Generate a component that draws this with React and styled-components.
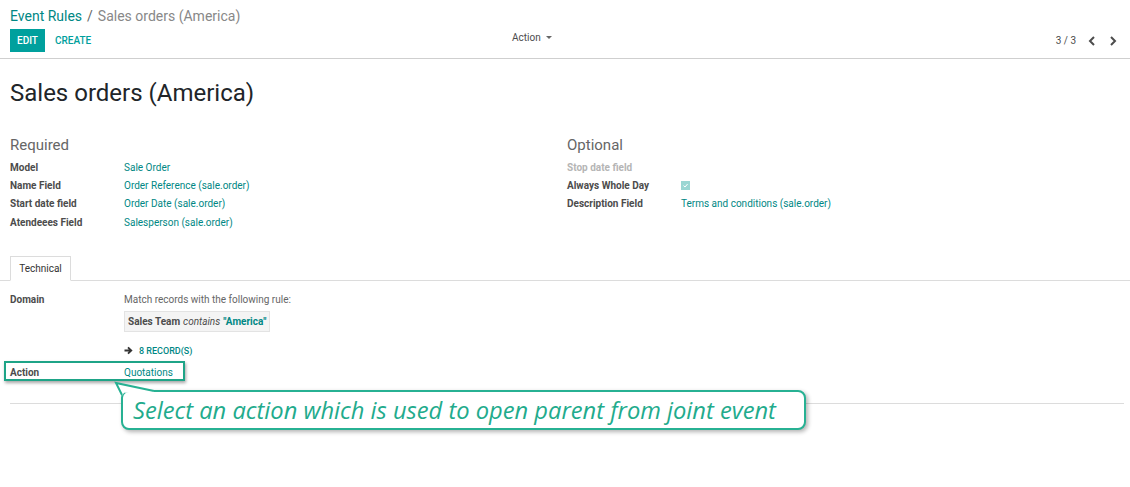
import React from "react";
import styled, { createGlobalStyle } from "styled-components";

const GlobalStyle = createGlobalStyle`
  html, body {
    margin: 0;
    padding: 0;
    background: #fff;
    font-family: Roboto, "Liberation Sans", sans-serif;
    color: #4c4c4c;
  }
  #root {
    min-height: 100vh;
  }
`;

const teal = "#00A09D";
const link = "#008784";

const ControlPanel = styled.header`
  border-bottom: 1px solid #cfcfcf;
  padding: 5px 10px 6px 10px;
`;

const Breadcrumb = styled.div`
  font-size: 14px;
  line-height: 22px;
  height: 24px;
  color: #888;

  a {
    color: ${link};
    text-decoration: none;
  }
`;

const Separator = styled.span`
  color: #666;
  margin: 0 5px;
`;

const ButtonBar = styled.div`
  display: grid;
  grid-template-columns: 1fr auto 1fr;
  align-items: center;
  height: 23px;
`;

const Buttons = styled.div`
  display: flex;
  align-items: center;
`;

const Button = styled.button`
  border: none;
  height: 23px;
  padding: 0 ${(p) => (p.primary ? "7px" : "10px")};
  background: ${(p) => (p.primary ? teal : "transparent")};
  color: ${(p) => (p.primary ? "#fff" : teal)};
  font-family: Roboto, "Liberation Sans", sans-serif;
  font-size: 10px;
  font-weight: 500;
  text-transform: uppercase;
  cursor: pointer;
`;

const ActionMenu = styled.div`
  font-size: 10px;
  color: #4c4c4c;
  display: flex;
  align-items: center;
  gap: 5px;
  margin-left: -53px;
  margin-top: -6px;
`;

const Caret = styled.span`
  width: 0;
  height: 0;
  border-left: 3px solid transparent;
  border-right: 3px solid transparent;
  border-top: 3px solid #666;
`;

const Pager = styled.div`
  justify-self: end;
  display: flex;
  align-items: center;
  font-size: 10px;
  color: #4c4c4c;
  margin-right: -3px;
`;

const PagerValue = styled.span`
  margin-right: 5px;
`;

const PagerButton = styled.span`
  width: 21px;
  display: flex;
  justify-content: center;
`;

const Sheet = styled.main`
  padding: 0 10px;
`;

const Title = styled.h1`
  margin: 19px 0 0 0;
  font-size: 24px;
  line-height: 30px;
  font-weight: 400;
  color: #212529;
`;

const Groups = styled.div`
  display: grid;
  grid-template-columns: 557px 1fr;
  margin-top: 28px;
`;

const GroupTitle = styled.h2`
  margin: 0 0 3px 0;
  font-size: 15px;
  line-height: 19px;
  font-weight: 400;
  color: #666;
`;

const FieldRow = styled.div`
  display: grid;
  grid-template-columns: 114px 1fr;
  align-items: center;
  height: 18.4px;
  font-size: 10px;
`;

const Label = styled.span`
  font-weight: 700;
  color: ${(p) => (p.muted ? "#b5b5b5" : "#4c4c4c")};
`;

const Value = styled.span`
  color: ${link};
`;

const Checkbox = styled.span`
  width: 9px;
  height: 9px;
  background: #9ad6d3;
  display: flex;
  align-items: center;
  justify-content: center;
`;

const Notebook = styled.div`
  margin: 24px -10px 0 -10px;
  border-bottom: 1px solid #dcdcdc;
  padding-left: 10px;
  display: flex;
  height: 24px;
`;

const Tab = styled.div`
  border: 1px solid #dcdcdc;
  border-bottom: 1px solid #fff;
  margin-bottom: -1px;
  background: #fff;
  width: 59px;
  font-size: 10px;
  color: #333;
  display: flex;
  align-items: center;
  justify-content: center;
`;

const TabPane = styled.section`
  padding-top: 13px;
  border-bottom: 1px solid #dcdcdc;
  padding-bottom: 23px;
  margin-right: -4px;
`;

const DomainRow = styled.div`
  display: grid;
  grid-template-columns: 114px 1fr;
  font-size: 10px;
`;

const DomainValue = styled.div`
  display: flex;
  flex-direction: column;
  align-items: flex-start;
`;

const DomainText = styled.span`
  color: #666;
`;

const Chip = styled.div`
  margin-top: 6px;
  background: #f4f4f4;
  border: 1px solid #e3e3e3;
  padding: 3px 3px;
  line-height: 13px;
  font-size: 10px;
  color: #4c4c4c;

  b {
    font-weight: 700;
  }
  i {
    margin: 0 3px;
  }
  strong {
    color: ${link};
    font-weight: 700;
  }
`;

const RecordsLink = styled.div`
  margin-top: 14px;
  display: flex;
  align-items: center;
  gap: 6px;
  font-size: 9px;
  font-weight: 500;
  color: ${link};
  text-transform: uppercase;
`;

const ActionRow = styled.div`
  position: relative;
  display: grid;
  grid-template-columns: 114px 1fr;
  font-size: 10px;
  margin-top: 10px;
  height: 14px;
  align-items: center;
`;

const Highlight = styled.div`
  position: absolute;
  left: -6px;
  top: -5px;
  width: 177px;
  height: 16px;
  border: 2px solid #1ea487;
  box-shadow: 1px 2px 3px rgba(0, 0, 0, 0.35);
  pointer-events: none;
`;

const Tail = styled.svg`
  position: absolute;
  left: 100px;
  top: 12px;
  overflow: visible;
  z-index: 2;
`;

const Callout = styled.div`
  position: absolute;
  left: 111px;
  top: 24px;
  width: 685px;
  height: 40px;
  border: 2px solid #27b193;
  border-radius: 8px;
  background: #fff;
  box-shadow: 2px 2px 4px rgba(0, 0, 0, 0.3);
  display: flex;
  align-items: center;
  padding-left: 10px;
  box-sizing: border-box;
  font-family: "Open Sans", "DejaVu Sans", sans-serif;
  font-style: italic;
  font-size: 23.7px;
  color: #22ab8c;
  white-space: nowrap;
  z-index: 1;
`;

const fields = [
  ["Model", "Sale Order"],
  ["Name Field", "Order Reference (sale.order)"],
  ["Start date field", "Order Date (sale.order)"],
  ["Atendeees Field", "Salesperson (sale.order)"],
];

export default function App() {
  return (
    <>
      <GlobalStyle />
      <ControlPanel>
        <Breadcrumb>
          <a href="#">Event Rules</a>
          <Separator>/</Separator>
          Sales orders (America)
        </Breadcrumb>
        <ButtonBar>
          <Buttons>
            <Button primary>Edit</Button>
            <Button>Create</Button>
          </Buttons>
          <ActionMenu>
            Action <Caret />
          </ActionMenu>
          <Pager>
            <PagerValue>3 / 3</PagerValue>
            <PagerButton>
              <svg width="8" height="10" viewBox="0 0 8 10">
                <path d="M6 1 L2 5 L6 9" fill="none" stroke="#4c4c4c" strokeWidth="2" />
              </svg>
            </PagerButton>
            <PagerButton>
              <svg width="8" height="10" viewBox="0 0 8 10">
                <path d="M2 1 L6 5 L2 9" fill="none" stroke="#4c4c4c" strokeWidth="2" />
              </svg>
            </PagerButton>
          </Pager>
        </ButtonBar>
      </ControlPanel>

      <Sheet>
        <Title>Sales orders (America)</Title>

        <Groups>
          <div>
            <GroupTitle>Required</GroupTitle>
            {fields.map(([label, value]) => (
              <FieldRow key={label}>
                <Label>{label}</Label>
                <Value>{value}</Value>
              </FieldRow>
            ))}
          </div>
          <div>
            <GroupTitle>Optional</GroupTitle>
            <FieldRow>
              <Label muted>Stop date field</Label>
              <span />
            </FieldRow>
            <FieldRow>
              <Label>Always Whole Day</Label>
              <Checkbox>
                <svg width="7" height="7" viewBox="0 0 7 7">
                  <path d="M1.5 3.6 L3 5 L5.6 2" fill="none" stroke="#fff" strokeWidth="1" />
                </svg>
              </Checkbox>
            </FieldRow>
            <FieldRow>
              <Label>Description Field</Label>
              <Value>Terms and conditions (sale.order)</Value>
            </FieldRow>
          </div>
        </Groups>

        <Notebook>
          <Tab>Technical</Tab>
        </Notebook>

        <TabPane>
          <DomainRow>
            <Label>Domain</Label>
            <DomainValue>
              <DomainText>Match records with the following rule:</DomainText>
              <Chip>
                <b>Sales Team</b>
                <i>contains</i>
                <strong>"America"</strong>
              </Chip>
              <RecordsLink>
                <svg width="9" height="9" viewBox="0 0 9 9">
                  <path d="M0.5 4.5 H7 M4 1.3 L7.3 4.5 L4 7.7" fill="none" stroke="#333" strokeWidth="1.8" />
                </svg>
                8 record(s)
              </RecordsLink>
            </DomainValue>
          </DomainRow>

          <ActionRow>
            <Label>Action</Label>
            <Value>Quotations</Value>
            <Highlight />
            <Callout>Select an action which is used to open parent from joint event</Callout>
            <Tail width="50" height="20">
              <path d="M6 5 L12.5 17.5 L14 14.8 L44 14.8 L44 12.5 Z" fill="#fff" />
              <path d="M12 17 L6 5 L44 13" fill="none" stroke="#27b193" strokeWidth="2" />
            </Tail>
          </ActionRow>
        </TabPane>
      </Sheet>
    </>
  );
}
